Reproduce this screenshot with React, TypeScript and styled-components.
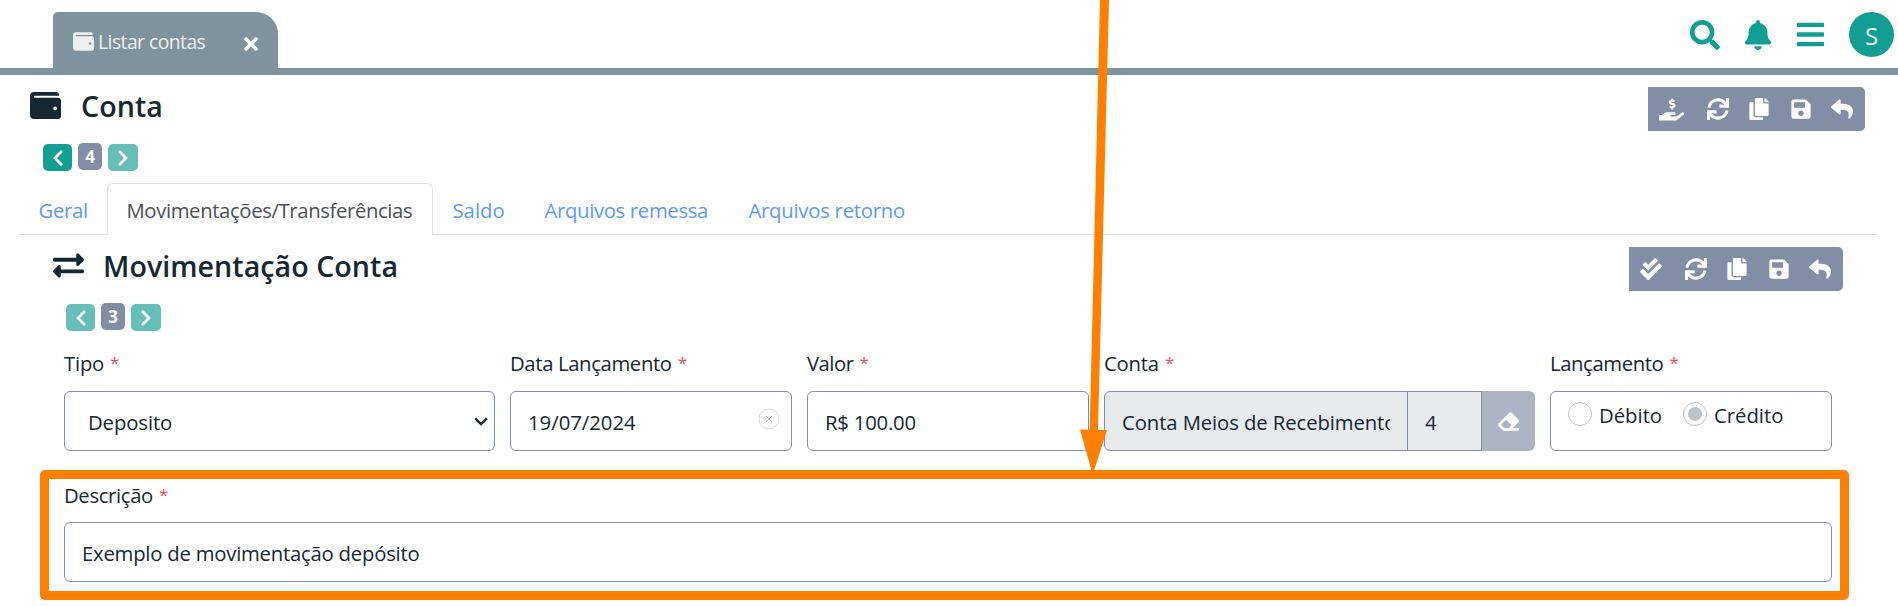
import React from 'react';
import styled, { createGlobalStyle } from 'styled-components';
import {
  FaBars, FaBell, FaCheckDouble, FaChevronLeft, FaChevronRight, FaCopy, FaEraser,
  FaExchangeAlt, FaHandHoldingUsd, FaReply, FaSave, FaSearch, FaSync, FaTimes, FaWallet,
} from 'react-icons/fa';

const ink = '#152733';
const slate = '#828ea6';
const teal = '#139e94';
const orange = '#ff8000';

const GlobalStyle = createGlobalStyle`
  * { box-sizing: border-box; }
  body {
    margin: 0;
    background: #fff;
    color: ${ink};
    font: 400 20.3px/30px 'Open Sans', 'Noto Sans', sans-serif;
  }
  svg { display: block; flex: none; }
`;

const Page = styled.div`
  position: relative;
  width: 1898px;
  height: 606px;
  overflow: hidden;
`;

const TopBar = styled.header`
  display: flex;
  justify-content: space-between;
  align-items: flex-start;
  height: 75px;
  padding: 12px 4px 0 53px;
  border-bottom: 7px solid #7e939d;
`;

const WindowTab = styled.div`
  display: flex;
  align-items: flex-start;
  width: 225px;
  height: 56px;
  padding: 15px 17px 0 20px;
  border-radius: 5px 22px 0 0;
  background: #7e939d;
  color: #efefef;
  font-size: 19.3px;
  letter-spacing: -0.52px;

  span { flex: 1; margin-left: 4px; }
  svg:first-child { margin-top: 4px; }
  svg:last-child { margin-top: 7px; color: #fff; }
`;

const TopActions = styled.nav`
  display: flex;
  align-items: flex-start;
  color: ${teal};

  svg { margin-top: 8px; }
  svg:nth-child(2) { margin-left: 23px; }
  svg:nth-child(3) { margin-left: 22px; margin-top: 7px; }
`;

const Avatar = styled.div`
  width: 45px;
  height: 45px;
  margin-left: 23px;
  border-radius: 50%;
  background: ${teal};
  color: #eef8f7;
  font-size: 24px;
  line-height: 47px;
  text-align: center;
`;

const SectionHead = styled.div<{ $inset: number; $right: number }>`
  display: flex;
  justify-content: space-between;
  height: 68px;
  padding: 12px ${p => p.$right}px 0 ${p => p.$inset}px;
`;

const Title = styled.h1<{ $gap: number }>`
  display: flex;
  gap: ${p => p.$gap}px;
  align-items: center;
  height: 37px;
  margin: 0;
  font-size: 28.6px;
  font-weight: 560;
  letter-spacing: 0.05px;
`;

const Toolbar = styled.div<{ $width: number }>`
  display: flex;
  align-items: center;
  justify-content: space-between;
  width: ${p => p.$width}px;
  height: 44px;
  padding: 0 12px 0 11px;
  border-radius: 0 5px 5px 0;
  background: ${slate};
  color: #fff;

  svg:nth-child(2) { margin-left: 3px; }
`;

const Pager = styled.div<{ $inset: number }>`
  display: flex;
  align-items: flex-start;
  gap: 6px;
  height: 40px;
  padding-left: ${p => p.$inset}px;
`;

const PageButton = styled.button<{ $faded?: boolean; $wide?: boolean }>`
  display: grid;
  place-items: center;
  width: ${p => (p.$wide ? 30 : 29)}px;
  height: 27px;
  margin-top: 1px;
  padding: 0;
  border: 0;
  border-radius: 5px;
  background: ${p => (p.$faded ? '#65beb7' : teal)};
  color: #fff;
`;

const PageNumber = styled.span`
  width: 24px;
  height: 27px;
  border-radius: 5px;
  background: ${slate};
  color: #fff;
  font-size: 17px;
  font-weight: 700;
  line-height: 28px;
  text-align: center;
`;

const Tabs = styled.div`
  display: flex;
  height: 52px;
  margin: 0 21px 0 19px;
  border-bottom: 1px solid #dee2e6;
`;

const Tab = styled.a<{ $active?: boolean; $width: number; $track: number }>`
  width: ${p => p.$width}px;
  height: 52px;
  padding: 11px 0 0 18.5px;
  border: 1px solid ${p => (p.$active ? '#dee2e6' : 'transparent')};
  border-bottom-color: ${p => (p.$active ? '#fff' : 'transparent')};
  border-radius: 6px 6px 0 0;
  color: ${p => (p.$active ? '#495057' : '#5d98ff')};
  letter-spacing: ${p => p.$track}px;
  white-space: nowrap;
`;

const Form = styled.form`
  display: grid;
  grid-template-columns: 431px 282px 282px 431px 282px;
  column-gap: 15px;
  row-gap: 29px;
  padding: 5px 0 0 64px;
`;

const Field = styled.div<{ $full?: boolean }>`
  grid-column: ${p => (p.$full ? '1 / -1' : 'auto')};
`;

const Label = styled.label<{ $track?: number; $height?: number }>`
  display: flex;
  height: ${p => p.$height ?? 43}px;
  letter-spacing: ${p => p.$track ?? 0}px;

  &::after {
    content: '*';
    margin-left: 6px;
    color: #e4505f;
    font-size: 17px;
    line-height: 29px;
  }
`;

const Control = styled.div<{ $indent?: number; $track?: number }>`
  display: flex;
  align-items: center;
  justify-content: space-between;
  height: 60px;
  padding: 1px 12px 0 ${p => p.$indent ?? 17}px;
  border: 1px solid ${slate};
  border-radius: 6px;
  letter-spacing: ${p => p.$track ?? 0}px;
`;

const DateControl = styled(Control)`
  svg { margin: -5px -1px 0 0; }
`;

const SelectControl = styled(Control)`
  svg { margin: -1px -6px 0 0; }
`;

const InputGroup = styled.div`
  display: flex;
  height: 60px;
`;

const LockedInput = styled.div<{ $width: number; $first?: boolean }>`
  width: ${p => p.$width}px;
  margin-right: ${p => (p.$first ? -1 : 0)}px;
  padding: 15px 17px 0;
  border: 1px solid ${slate};
  border-radius: ${p => (p.$first ? '6px 0 0 6px' : '0')};
  background: #e8ebee;
  letter-spacing: -0.09px;

  span {
    display: block;
    overflow: hidden;
    white-space: nowrap;
  }
`;

const ClearButton = styled.button`
  display: grid;
  flex: 1;
  place-items: center;
  padding: 0;
  border: 0;
  border-radius: 0 6px 6px 0;
  background: #acb4c3;
  color: #fff;
`;

const RadioGroup = styled.div`
  display: flex;
  align-items: flex-start;
  height: 60px;
  padding: 8px 0 0 17px;
  border: 1px solid ${slate};
  border-radius: 6px;
`;

const Radio = styled.span<{ $checked?: boolean }>`
  display: grid;
  place-items: center;
  width: 24px;
  height: 24px;
  margin-top: 2px;
  border: 1px solid #bcc1c5;
  border-radius: 50%;

  &::after {
    content: '';
    width: 14px;
    height: 14px;
    border-radius: 50%;
    background: ${p => (p.$checked ? '#bcc2c6' : 'transparent')};
  }
`;

const RadioLabel = styled.span`
  width: 91px;
  padding-left: 7px;
`;

const Highlight = styled.div`
  position: absolute;
  left: 40px;
  top: 470px;
  width: 1809px;
  height: 130px;
  border: 9px solid ${orange};
  border-radius: 5px;
`;

const Arrow = styled.svg`
  position: absolute;
  left: 1070px;
  top: 0;
`;

const ToolbarIcons = () => (
  <>
    <FaSync size={22} />
    <FaCopy size={22} />
    <FaSave size={22} />
    <FaReply size={22} />
  </>
);

const Dismiss = () => (
  <svg width="22" height="22" viewBox="0 0 22 22" fill="none">
    <circle cx="11" cy="11" r="10" stroke="#d9d9dc" />
    <path d="M8 8l6 6M14 8l-6 6" stroke="#b3b3bd" />
  </svg>
);

const Caret = () => (
  <svg width="14" height="9" viewBox="0 0 14 9" fill="none">
    <path d="M1.2 1.4L7 7l5.8-5.6" stroke={ink} strokeWidth="2.4" />
  </svg>
);

export default function App() {
  return (
    <Page>
      <GlobalStyle />
      <TopBar>
        <WindowTab>
          <FaWallet size={21} />
          <span>Listar contas</span>
          <FaTimes size={20} />
        </WindowTab>
        <TopActions>
          <FaSearch size={30} />
          <FaBell size={30} />
          <FaBars size={31} />
          <Avatar>S</Avatar>
        </TopActions>
      </TopBar>

      <SectionHead $inset={30} $right={33}>
        <Title $gap={20}><FaWallet size={31} />Conta</Title>
        <Toolbar $width={217}>
          <FaHandHoldingUsd size={25} />
          <ToolbarIcons />
        </Toolbar>
      </SectionHead>
      <Pager $inset={43}>
        <PageButton><FaChevronLeft size={18} /></PageButton>
        <PageNumber>4</PageNumber>
        <PageButton $faded $wide><FaChevronRight size={18} /></PageButton>
      </Pager>

      <Tabs>
        <Tab $width={88} $track={-0.3}>Geral</Tab>
        <Tab $width={326} $track={-0.37} $active>Movimentações/Transferências</Tab>
        <Tab $width={92} $track={0}>Saldo</Tab>
        <Tab $width={204} $track={-0.33}>Arquivos remessa</Tab>
        <Tab $width={196} $track={-0.25}>Arquivos retorno</Tab>
      </Tabs>

      <SectionHead $inset={53} $right={55}>
        <Title $gap={19}><FaExchangeAlt size={31} />Movimentação Conta</Title>
        <Toolbar $width={214}>
          <FaCheckDouble size={22} />
          <ToolbarIcons />
        </Toolbar>
      </SectionHead>
      <Pager $inset={66}>
        <PageButton $faded><FaChevronLeft size={18} /></PageButton>
        <PageNumber>3</PageNumber>
        <PageButton $faded $wide><FaChevronRight size={18} /></PageButton>
      </Pager>

      <Form>
        <Field>
          <Label $track={-0.2}>Tipo</Label>
          <SelectControl $indent={23} $track={-0.1}>Deposito<Caret /></SelectControl>
        </Field>
        <Field>
          <Label $track={-0.36}>Data Lançamento</Label>
          <DateControl>19/07/2024<Dismiss /></DateControl>
        </Field>
        <Field>
          <Label $track={-0.5}>Valor</Label>
          <Control $track={-0.2}>R$ 100.00</Control>
        </Field>
        <Field>
          <Label $track={-0.2}>Conta</Label>
          <InputGroup>
            <LockedInput $width={304} $first><span>Conta Meios de Recebimento</span></LockedInput>
            <LockedInput $width={75}><span>4</span></LockedInput>
            <ClearButton type="button"><FaEraser size={21} /></ClearButton>
          </InputGroup>
        </Field>
        <Field>
          <Label $track={-0.4}>Lançamento</Label>
          <RadioGroup>
            <Radio /><RadioLabel>Débito</RadioLabel>
            <Radio $checked /><RadioLabel>Crédito</RadioLabel>
          </RadioGroup>
        </Field>
        <Field $full>
          <Label $track={-0.35} $height={42}>Descrição</Label>
          <Control $track={-0.22}>Exemplo de movimentação depósito</Control>
        </Field>
      </Form>

      <Highlight />
      <Arrow width="50" height="475" viewBox="0 0 50 475" fill={orange}>
        <path d="M30 0h9L28 430h9L22.7 475 10 429.5h9.7z" />
      </Arrow>
    </Page>
  );
}
